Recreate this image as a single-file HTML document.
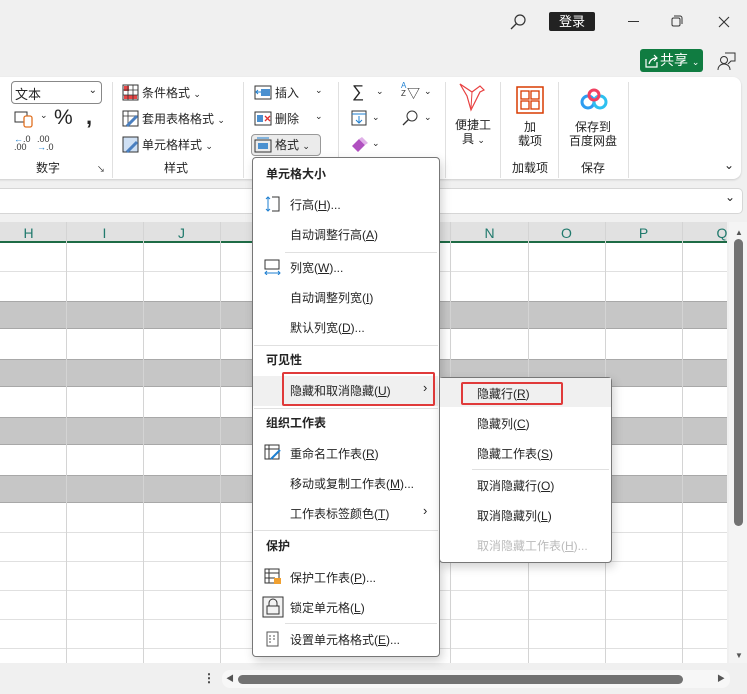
<!DOCTYPE html>
<html><head><meta charset="utf-8"><style>
*{margin:0;padding:0;box-sizing:border-box}
body{width:747px;height:694px;overflow:hidden;background:#f0f0f0;font-family:"Liberation Sans","Noto Sans CJK SC",sans-serif;font-size:12px;color:#242424;position:relative}
.a{position:absolute;white-space:nowrap}
.sep{position:absolute;width:1px;background:#e0e0e0;top:82px;height:96px}
.mi{position:absolute;left:290px;font-size:12px;color:#242424}
.mh{position:absolute;left:266px;font-weight:bold;font-size:12px}
.si{position:absolute;left:477px;font-size:12px}
.hl{position:absolute;height:1px;background:#e0e0e0}
.ch{position:absolute;top:225px;color:#217a6d;font-size:14px;width:77px;text-align:center}
</style></head><body>
<!-- title bar -->
<svg class="a" style="left:509px;top:12px" width="20" height="20"><circle cx="11" cy="8" r="5" fill="none" stroke="#333" stroke-width="1.2"/><line x1="7.5" y1="11.5" x2="2" y2="17" stroke="#333" stroke-width="1.3"/></svg>
<div class="a" style="left:549px;top:12px;width:46px;height:19px;background:#222;color:#fff;text-align:center;line-height:19px;font-size:13px;border-radius:2px">登录</div>
<div class="a" style="left:628px;top:21px;width:11px;height:1px;background:#333"></div>
<svg class="a" style="left:671px;top:15px" width="12" height="12"><rect x="1" y="3" width="8" height="8" rx="1.5" fill="none" stroke="#333"/><path d="M3 1h6a2 2 0 0 1 2 2v6" fill="none" stroke="#333"/></svg>
<svg class="a" style="left:718px;top:16px" width="12" height="12"><path d="M1 1l10 10M11 1L1 11" stroke="#333" stroke-width="1.1"/></svg>
<div class="a" style="left:640px;top:49px;width:63px;height:23px;background:#107c41;border-radius:3px;color:#fff;font-size:14px;line-height:23px;padding-left:20px">共享 <span style="font-size:9px">⌄</span></div>
<svg class="a" style="left:644px;top:53px" width="16" height="16"><path d="M2 6v8h11v-5" fill="none" stroke="#fff" stroke-width="1.2"/><path d="M5 11c1-4 4-6 8-6M10 2l3 3-3 3" fill="none" stroke="#fff" stroke-width="1.2"/></svg>
<svg class="a" style="left:716px;top:51px" width="20" height="20"><circle cx="8" cy="9" r="3.5" fill="none" stroke="#333"/><path d="M2 19c0-4 3-6 6-6s6 2 6 6" fill="none" stroke="#333"/><path d="M9 2h10v8h-4l-3 3" fill="none" stroke="#333"/></svg>

<!-- ribbon -->
<div class="a" style="left:-10px;top:77px;width:751px;height:102px;background:#fff;border-radius:8px;box-shadow:0 1px 2px rgba(0,0,0,.15)"></div>
<div class="a" style="left:11px;top:81px;width:91px;height:23px;border:1px solid #888;border-radius:4px;padding:2px 3px;font-size:13px">文本<span style="position:absolute;right:4px;top:3px;font-size:10px">⌄</span></div>
<svg class="a" style="left:14px;top:110px" width="22" height="18"><rect x="1" y="2" width="12" height="10" fill="none" stroke="#333"/><rect x="10" y="6" width="8" height="11" rx="2" fill="#fff" stroke="#e07020" stroke-width="1.3"/></svg>
<div class="a" style="left:40px;top:110px;font-size:9px">⌄</div>
<div class="a" style="left:54px;top:106px;font-size:21px">%</div>
<div class="a" style="left:86px;top:104px;font-size:22px;font-weight:bold">,</div>
<div class="a" style="left:14px;top:135px;font-size:9px;line-height:8px;color:#333"><span style="color:#1e7fd0">←</span>.0<br>.00</div>
<div class="a" style="left:37px;top:135px;font-size:9px;line-height:8px;color:#333">.00<br><span style="color:#1e7fd0">→</span>.0</div>
<div class="a" style="left:36px;top:159px;font-size:12px">数字</div>
<div class="a" style="left:97px;top:164px;font-size:8px">↘</div>
<div class="sep" style="left:112px"></div>
<svg class="a" style="left:122px;top:84px" width="17" height="17"><rect x="1" y="1" width="15" height="15" fill="none" stroke="#333"/><rect x="2" y="2" width="5" height="5" fill="#e84545"/><rect x="2" y="11" width="13" height="4" fill="#e84545"/><path d="M1 6h15M1 11h15M6 1v15M11 1v15" stroke="#333" stroke-width=".8"/></svg>
<div class="a" style="left:142px;top:84px;font-size:12px">条件格式 <span style="font-size:9px">⌄</span></div>
<svg class="a" style="left:122px;top:110px" width="17" height="17"><rect x="1" y="1" width="15" height="15" fill="none" stroke="#333"/><path d="M1 6h15M6 1v15" stroke="#333" stroke-width=".8"/><path d="M5 16l10-10" stroke="#4a7fc0" stroke-width="3"/></svg>
<div class="a" style="left:142px;top:110px;font-size:12px">套用表格格式 <span style="font-size:9px">⌄</span></div>
<svg class="a" style="left:122px;top:136px" width="17" height="17"><rect x="1" y="1" width="15" height="15" fill="#cfe0f4" stroke="#333"/><path d="M5 16l10-10" stroke="#4a7fc0" stroke-width="3"/></svg>
<div class="a" style="left:142px;top:136px;font-size:12px">单元格样式 <span style="font-size:9px">⌄</span></div>
<div class="a" style="left:164px;top:159px;font-size:12px">样式</div>
<div class="sep" style="left:243px"></div>
<svg class="a" style="left:254px;top:85px" width="18" height="15"><rect x="1" y="1" width="16" height="13" fill="none" stroke="#333"/><rect x="7" y="4" width="9" height="7" fill="#4a90d0"/><path d="M2 7h5M4 5l-2 2 2 2" stroke="#1e7fd0" fill="none"/></svg>
<div class="a" style="left:275px;top:84px">插入</div><div class="a" style="left:315px;top:85px;font-size:9px">⌄</div>
<svg class="a" style="left:254px;top:111px" width="18" height="15"><rect x="1" y="1" width="16" height="13" fill="none" stroke="#333"/><rect x="3" y="4" width="6" height="7" fill="#4a90d0"/><path d="M11 5l5 5M16 5l-5 5" stroke="#e03030" stroke-width="1.3"/></svg>
<div class="a" style="left:275px;top:110px">删除</div><div class="a" style="left:315px;top:111px;font-size:9px">⌄</div>
<div class="a" style="left:251px;top:134px;width:70px;height:22px;background:#ebebeb;border:1px solid #999;border-radius:4px"></div>
<svg class="a" style="left:254px;top:137px" width="18" height="16"><rect x="1" y="3" width="16" height="12" fill="none" stroke="#333"/><rect x="4" y="6" width="10" height="6" fill="#4a90d0"/><path d="M3 1h12" stroke="#1e7fd0"/></svg>
<div class="a" style="left:275px;top:136px">格式 <span style="font-size:9px">⌄</span></div>
<div class="sep" style="left:338px"></div>
<div class="a" style="left:352px;top:82px;font-size:17px">∑</div><div class="a" style="left:376px;top:86px;font-size:9px">⌄</div>
<div class="a" style="left:401px;top:82px;font-size:8px;line-height:8px;color:#1e7fd0">A<br><span style="color:#333">Z</span></div><div class="a" style="left:407px;top:83px;font-size:13px">▽</div><div class="a" style="left:424px;top:86px;font-size:9px">⌄</div>
<svg class="a" style="left:351px;top:110px" width="16" height="16"><rect x="1" y="1" width="14" height="14" fill="none" stroke="#333"/><path d="M1 4h14M8 6v7M5 10l3 3 3-3" stroke="#1e7fd0" fill="none"/></svg><div class="a" style="left:372px;top:112px;font-size:9px">⌄</div>
<svg class="a" style="left:401px;top:109px" width="18" height="18"><circle cx="11" cy="7" r="5" fill="none" stroke="#333"/><path d="M7.5 10.5L2 16" stroke="#333" stroke-width="1.3"/></svg><div class="a" style="left:424px;top:112px;font-size:9px">⌄</div>
<svg class="a" style="left:351px;top:136px" width="18" height="16"><path d="M1 10l7-7 6 6-7 7z" fill="#b050c0"/><path d="M8 3l3-2 6 6-3 2z" fill="#e0b0e8"/></svg><div class="a" style="left:372px;top:138px;font-size:9px">⌄</div>
<div class="sep" style="left:445px"></div>
<svg class="a" style="left:458px;top:82px" width="30" height="30"><path d="M2 2l12 8 8-6 4 4-4 2-9 18-4-14z" fill="none" stroke="#e84040" stroke-width="1.2"/><path d="M14 10l-1 16" stroke="#e84040"/></svg>
<div class="a" style="left:455px;top:116px;font-size:12px">便捷工</div><div class="a" style="left:462px;top:130px;font-size:12px">具 <span style="font-size:9px">⌄</span></div>
<div class="sep" style="left:500px"></div>
<svg class="a" style="left:516px;top:86px" width="28" height="28"><rect x="1" y="1" width="26" height="26" fill="none" stroke="#d83b01" stroke-width="1.5"/><rect x="5" y="5" width="8" height="8" fill="none" stroke="#d83b01" stroke-width="1.3"/><rect x="15" y="5" width="8" height="8" fill="none" stroke="#d83b01" stroke-width="1.3"/><rect x="5" y="15" width="8" height="8" fill="none" stroke="#d83b01" stroke-width="1.3"/><rect x="15" y="15" width="8" height="8" fill="none" stroke="#d83b01" stroke-width="1.3"/></svg>
<div class="a" style="left:524px;top:118px">加</div><div class="a" style="left:518px;top:132px">载项</div>
<div class="a" style="left:512px;top:159px">加载项</div>
<div class="sep" style="left:558px"></div>
<svg class="a" style="left:580px;top:88px" width="28" height="22"><circle cx="8" cy="14" r="6" fill="none" stroke="#2d9cf0" stroke-width="3"/><circle cx="20" cy="14" r="6" fill="none" stroke="#2dc0f0" stroke-width="3"/><circle cx="14" cy="7" r="5" fill="none" stroke="#f04060" stroke-width="3"/></svg>
<div class="a" style="left:575px;top:118px">保存到</div><div class="a" style="left:569px;top:132px">百度网盘</div>
<div class="a" style="left:581px;top:159px">保存</div>
<div class="sep" style="left:628px"></div>
<div class="a" style="left:724px;top:158px;font-size:12px">⌄</div>

<!-- formula bar -->
<div class="a" style="left:-6px;top:188px;width:749px;height:26px;background:#fff;border:1px solid #d6d6d6;border-radius:5px"></div>
<div class="a" style="left:725px;top:190px;font-size:12px">⌄</div>

<!-- grid -->
<div class="a" style="left:0;top:222px;width:727px;height:20px;background:#e1e1e1"></div>
<div class="a" style="left:0;top:241px;width:727px;height:2px;background:#1e6b45"></div>
<div class="a" style="left:0;top:243px;width:727px;height:420px;background:#fff"></div>
<div class="a" style="left:0;top:301px;width:727px;height:28px;background:#c6c6c6;border-top:1px solid #a8a8a8;border-bottom:1px solid #a8a8a8"></div>
<div class="a" style="left:0;top:359px;width:727px;height:28px;background:#c6c6c6;border-top:1px solid #a8a8a8;border-bottom:1px solid #a8a8a8"></div>
<div class="a" style="left:0;top:417px;width:727px;height:28px;background:#c6c6c6;border-top:1px solid #a8a8a8;border-bottom:1px solid #a8a8a8"></div>
<div class="a" style="left:0;top:475px;width:727px;height:28px;background:#c6c6c6;border-top:1px solid #a8a8a8;border-bottom:1px solid #a8a8a8"></div>
<div class="hl" style="left:0;top:271px;width:727px"></div>
<div class="hl" style="left:0;top:532px;width:727px"></div>
<div class="hl" style="left:0;top:561px;width:727px"></div>
<div class="hl" style="left:0;top:590px;width:727px"></div>
<div class="hl" style="left:0;top:619px;width:727px"></div>
<div class="hl" style="left:0;top:648px;width:727px"></div>
<div class="a" style="left:66px;top:222px;width:1px;height:441px;background:#d4d4d4"></div>
<div class="a" style="left:143px;top:222px;width:1px;height:441px;background:#d4d4d4"></div>
<div class="a" style="left:220px;top:222px;width:1px;height:441px;background:#d4d4d4"></div>
<div class="a" style="left:450px;top:222px;width:1px;height:441px;background:#d4d4d4"></div>
<div class="a" style="left:528px;top:222px;width:1px;height:441px;background:#d4d4d4"></div>
<div class="a" style="left:605px;top:222px;width:1px;height:441px;background:#d4d4d4"></div>
<div class="a" style="left:682px;top:222px;width:1px;height:441px;background:#d4d4d4"></div>
<div class="ch" style="left:-10px">H</div><div class="ch" style="left:66px">I</div><div class="ch" style="left:143px">J</div>
<div class="ch" style="left:451px">N</div><div class="ch" style="left:528px">O</div><div class="ch" style="left:605px">P</div><div class="ch" style="left:682px;width:80px">Q</div>
<!-- scrollbars -->
<div class="a" style="left:729px;top:222px;width:18px;height:441px;background:#f4f4f4"></div>
<div class="a" style="left:734px;top:239px;width:9px;height:287px;background:#727272;border-radius:5px"></div>
<div class="a" style="left:735px;top:228px;font-size:8px;color:#555">▲</div>
<div class="a" style="left:735px;top:651px;font-size:8px;color:#555">▼</div>
<div class="a" style="left:203px;top:671px;font-size:12px;font-weight:bold;color:#333">⋮</div>
<div class="a" style="left:222px;top:670px;width:508px;height:18px;background:#f7f7f7;border-radius:8px"></div>
<div class="a" style="left:226px;top:673px;font-size:8px;color:#555">◀</div>
<div class="a" style="left:238px;top:675px;width:445px;height:9px;background:#727272;border-radius:5px"></div>
<div class="a" style="left:717px;top:673px;font-size:8px;color:#555">▶</div>

<!-- main menu -->
<div class="a" style="left:252px;top:157px;width:188px;height:500px;background:#fff;border:1px solid #777;border-radius:4px;box-shadow:2px 4px 10px rgba(0,0,0,.18)"></div>
<div class="mh" style="top:165px">单元格大小</div>
<svg class="a" style="left:264px;top:196px" width="16" height="16"><path d="M4 1v14M2 3l2-2 2 2M2 13l2 2 2-2" stroke="#1e7fd0" fill="none"/><path d="M8 1h7v14H8" stroke="#333" fill="none"/></svg>
<div class="mi" style="top:196px">行高(<u>H</u>)...</div>
<div class="mi" style="top:226px">自动调整行高(<u>A</u>)</div>
<div class="hl" style="left:285px;top:252px;width:152px"></div>
<svg class="a" style="left:264px;top:259px" width="17" height="16"><path d="M1 1h14v9H1z" stroke="#333" fill="none"/><path d="M1 14h15M3 12l-2 2 2 2M14 12l2 2-2 2" stroke="#1e7fd0" fill="none"/></svg>
<div class="mi" style="top:259px">列宽(<u>W</u>)...</div>
<div class="mi" style="top:289px">自动调整列宽(<u>I</u>)</div>
<div class="mi" style="top:319px">默认列宽(<u>D</u>)...</div>
<div class="hl" style="left:254px;top:345px;width:184px"></div>
<div class="mh" style="top:351px">可见性</div>
<div class="a" style="left:253px;top:376px;width:185px;height:30px;background:#f0f0f0"></div>
<div class="a" style="left:282px;top:372px;width:153px;height:34px;border:2px solid #e03a3a;border-radius:2px"></div>
<div class="mi" style="top:382px">隐藏和取消隐藏(<u>U</u>)</div>
<div class="a" style="left:423px;top:380px;font-size:13px">›</div>
<div class="hl" style="left:254px;top:408px;width:184px"></div>
<div class="mh" style="top:414px">组织工作表</div>
<svg class="a" style="left:264px;top:444px" width="18" height="17"><rect x="1" y="1" width="14" height="14" fill="none" stroke="#333"/><path d="M1 5h14M5 1v14" stroke="#333"/><path d="M7 15l9-9" stroke="#1e7fd0" stroke-width="2"/></svg>
<div class="mi" style="top:445px">重命名工作表(<u>R</u>)</div>
<div class="mi" style="top:475px">移动或复制工作表(<u>M</u>)...</div>
<div class="mi" style="top:505px">工作表标签颜色(<u>T</u>)</div>
<div class="a" style="left:423px;top:503px;font-size:13px">›</div>
<div class="hl" style="left:254px;top:530px;width:184px"></div>
<div class="mh" style="top:537px">保护</div>
<svg class="a" style="left:264px;top:568px" width="18" height="17"><rect x="1" y="1" width="14" height="14" fill="none" stroke="#333"/><path d="M1 5h14M5 1v14M1 10h10" stroke="#333"/><rect x="10" y="10" width="7" height="6" fill="#f0a030"/></svg>
<div class="mi" style="top:569px">保护工作表(<u>P</u>)...</div>
<svg class="a" style="left:262px;top:596px" width="22" height="22"><rect x="1" y="1" width="20" height="20" fill="#f3f3f3" stroke="#333"/><rect x="5" y="10" width="12" height="8" fill="none" stroke="#333"/><path d="M7 10V7a4 4 0 0 1 8 0v3" fill="none" stroke="#333"/></svg>
<div class="mi" style="top:599px">锁定单元格(<u>L</u>)</div>
<div class="hl" style="left:285px;top:623px;width:152px"></div>
<svg class="a" style="left:266px;top:631px" width="14" height="16"><rect x="1" y="1" width="11" height="14" fill="none" stroke="#555"/><path d="M3 5h2M3 8h2M3 11h2M7 5h2M7 8h2" stroke="#555"/></svg>
<div class="mi" style="top:631px">设置单元格格式(<u>E</u>)...</div>

<!-- submenu -->
<div class="a" style="left:439px;top:377px;width:173px;height:186px;background:#fff;border:1px solid #777;border-radius:4px;box-shadow:2px 4px 10px rgba(0,0,0,.18)"></div>
<div class="a" style="left:440px;top:378px;width:171px;height:29px;background:#f0f0f0"></div>
<div class="a" style="left:461px;top:382px;width:102px;height:23px;border:2px solid #e03a3a;border-radius:2px"></div>
<div class="si" style="top:385px">隐藏行(<u>R</u>)</div>
<div class="si" style="top:415px">隐藏列(<u>C</u>)</div>
<div class="si" style="top:445px">隐藏工作表(<u>S</u>)</div>
<div class="hl" style="left:472px;top:469px;width:137px"></div>
<div class="si" style="top:477px">取消隐藏行(<u>O</u>)</div>
<div class="si" style="top:507px">取消隐藏列(<u>L</u>)</div>
<div class="si" style="top:537px;color:#bbb">取消隐藏工作表(<u>H</u>)...</div>
</body></html>
